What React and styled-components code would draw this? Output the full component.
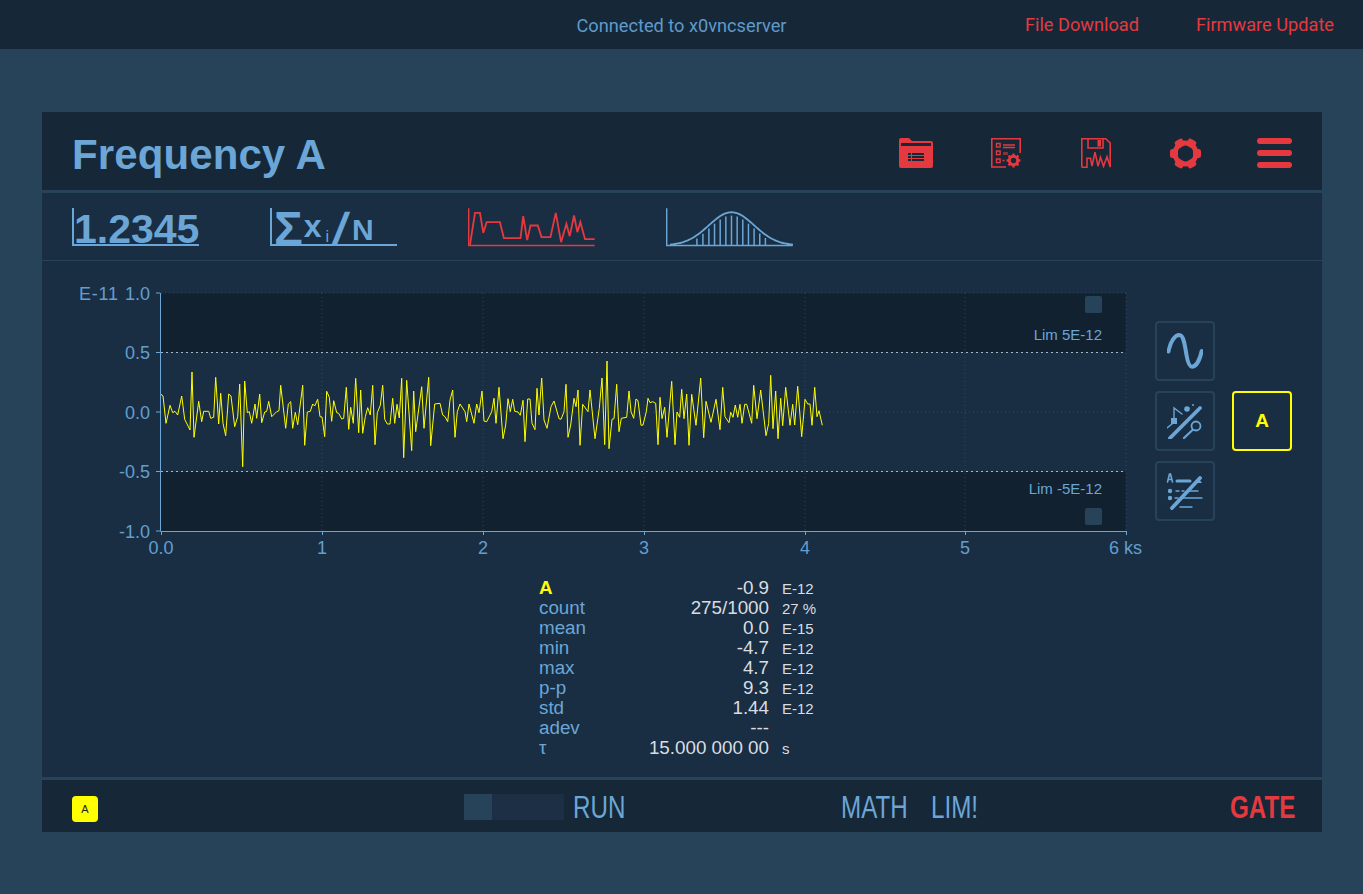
import React from 'react';
import styled, { createGlobalStyle } from 'styled-components';

const BLUE = '#6ba6d6';
const RED = '#e4393f';
const YELLOW = '#ffff00';

const GlobalStyle = createGlobalStyle`
  html, body {
    margin: 0;
    padding: 0;
    background: #27435a;
    font-family: "Liberation Sans", Arial, sans-serif;
  }
`;

const Page = styled.div`
  height: 894px;
  overflow: hidden;
`;

const TopBar = styled.header`
  height: 49px;
  background: #162838;
  display: grid;
  grid-template-columns: 1fr auto 1fr;
  align-items: center;
  font-family: Roboto, sans-serif;
  font-size: 18.2px;
`;

const Connected = styled.div`
  grid-column: 2;
  color: #5f9acb;
  padding-top: 1px;
`;

const TopLinks = styled.nav`
  display: flex;
  justify-content: flex-end;
  gap: 57px;
  padding-right: 29px;
`;

const TopLink = styled.a`
  color: ${RED};
`;

const Panel = styled.main`
  width: 1280px;
  height: 720px;
  margin: 63px 0 0 42px;
  background: #192e43;
  display: flex;
  flex-direction: column;
`;

const Header = styled.div`
  height: 78px;
  flex: none;
  background: #162838;
  border-bottom: 3px solid #27435a;
  display: flex;
  align-items: center;
  padding: 0 30px;
`;

const Title = styled.h1`
  margin: 0;
  flex: 1;
  font-size: 42px;
  font-weight: 700;
  letter-spacing: 0.1px;
  color: ${BLUE};
  position: relative;
  top: 4px;
`;

const HeaderIcons = styled.div`
  display: flex;
  align-items: center;
  color: ${RED};
  margin-top: 4px;
`;

const HeaderIcon = styled.div`
  width: ${(p) => p.$w}px;
  margin-left: ${(p) => p.$gap}px;
  display: flex;
  justify-content: center;
`;

const Tabs = styled.div`
  height: 68px;
  flex: none;
  display: flex;
  gap: 71px;
  align-items: flex-start;
  padding: 15px 30px 0;
  box-sizing: border-box;
  border-bottom: 1px solid #27435a;
`;

const Tab = styled.div`
  width: 127px;
  height: 38px;
  box-sizing: border-box;
  border-left: 2px solid ${BLUE};
  border-bottom: 2px solid ${BLUE};
  color: ${BLUE};
  display: flex;
  align-items: flex-end;
  white-space: nowrap;
  font-weight: 700;
`;

const TabPlain = styled.div`
  width: 127px;
  height: 38px;
`;

const BigNumber = styled.span`
  font-size: 41px;
  line-height: 41px;
  margin-bottom: -6px;
`;

const Mean = styled.div`
  display: flex;
  align-items: baseline;
  margin-left: 2px;
  margin-bottom: -9px;
`;

const Sigma = styled.span`
  font-size: 48px;
  line-height: 47px;
`;

const MeanX = styled.span`
  font-size: ${(p) => p.$size}px;
  margin-left: ${(p) => p.$gap}px;
  position: relative;
  top: ${(p) => p.$lift}px;
`;

const MeanSub = styled.span`
  font-size: 16px;
  font-weight: 400;
  margin-left: 4px;
  position: relative;
  top: -3px;
`;

const MeanDiv = styled.span`
  font-size: 46px;
  line-height: 47px;
  margin-left: 5px;
  font-weight: 700;
  transform: skewX(-12deg);
`;

const ChartArea = styled.section`
  display: flex;
  flex: none;
`;

const Plot = styled.svg`
  display: block;
  width: 1113px;
  height: 304px;
  flex: none;
`;

const SideButtons = styled.div`
  display: grid;
  grid-template-columns: 60px 60px;
  grid-template-rows: repeat(3, 60px);
  column-gap: 17px;
  row-gap: 10px;
  padding-top: 60px;
`;

const SideButton = styled.button`
  padding: 0;
  background: none;
  box-sizing: border-box;
  border: 2px solid ${(p) => (p.$active ? YELLOW : '#27435a')};
  border-radius: 4px;
  display: flex;
  align-items: center;
  justify-content: center;
  color: ${YELLOW};
  font: 700 19px "Liberation Sans", sans-serif;
  grid-column: ${(p) => (p.$active ? 2 : 1)};
  grid-row: ${(p) => p.$row};
`;

const Stats = styled.section`
  flex: 1;
  padding: 13px 0 0 497px;
  display: grid;
  grid-template-columns: 100px 130px 60px;
  grid-auto-rows: 20px;
  align-items: center;
  font-size: 18.8px;
`;

const StatLabel = styled.div`
  color: ${(p) => (p.$head ? YELLOW : BLUE)};
  font-weight: ${(p) => (p.$head ? 700 : 400)};
`;

const StatValue = styled.div`
  color: #d9dde0;
  text-align: right;
`;

const StatUnit = styled.div`
  color: #d9dde0;
  font-size: 15px;
  padding-left: 13px;
  white-space: nowrap;
`;

const Footer = styled.footer`
  height: 55px;
  flex: none;
  box-sizing: border-box;
  background: #162838;
  border-top: 3px solid #27435a;
  display: flex;
  align-items: center;
  padding: 0 27px 0 30px;
`;

const Badge = styled.div`
  width: 26px;
  height: 26px;
  flex: none;
  border-radius: 4px;
  background: ${YELLOW};
  color: #222;
  font-size: 11px;
  display: flex;
  align-items: center;
  justify-content: center;
  margin-top: 6px;
  margin-right: 366px;
`;

const Progress = styled.div`
  width: 100px;
  height: 26px;
  flex: none;
  background: #1c2f44;
  margin-top: 2px;
  margin-right: 9px;
`;

const ProgressFill = styled.div`
  height: 100%;
  background: #27435a;
`;

// no narrow face is installed, so the regular one is squeezed
const FooterLabel = styled.span`
  flex: none;
  width: ${(p) => p.$w}px;
  margin-left: ${(p) => p.$gap || 0}px;
  font-size: 31px;
  line-height: 36px;
  white-space: nowrap;
  color: ${(p) => (p.$red ? RED : BLUE)};
  font-weight: ${(p) => (p.$red ? 700 : 400)};
  transform: translateY(2px) scaleX(0.78);
  transform-origin: left center;
`;

const AxisText = styled.text`
  font-family: "Liberation Sans", sans-serif;
  font-size: 18px;
  fill: #639ecf;
`;

const LimText = styled.text`
  font-family: "Liberation Sans", sans-serif;
  font-size: 15px;
  fill: ${BLUE};
`;

// trace, read off the reference in 3x crop coordinates
const part1 = [[303,343],[309,348],[318,430],[330,376],[338,398],[345,394],[353,405],[365,348],[374,418],[390,450],[396,276],[402,472],[416,364],[425,425],[431,394],[446,394],[452,415],[461,412],[467,292],[476,432],[482,340],[489,430],[497,467],[506,342],[513,348],[524,440],[533,410],[539,312],[548,560],[554,303],[562,398],[568,395],[575,430],[585,372],[590,415],[599,342],[605,428],[614,396],[620,394],[626,364],[635,410],[650,395],[657,392],[662,316],[677,445],[685,372],[692,365],[698,445],[706,397],[713,434],[728,316],[734,496],[742,396],[751,394],[758,372],[764,378],[773,358],[780,410],[786,411],[794,470],[800,334],[808,352],[815,424],[821,362],[830,398],[836,400],[845,417],[851,415],[859,322],[866,448],[872,382],[880,430],[887,295],[896,458],[902,330],[908,460],[916,410],[923,383],[931,405],[938,316],[945,494],[952,398],[961,376],[968,316],[974,418],[982,432],[990,432],[998,355],[1004,430],[1011,373],[1018,414],[1025,295],[1031,533],[1040,301],[1055,512],[1061,333],[1067,455],[1085,320],[1092,445],[1106,292],[1112,497],[1124,372],[1140,370],[1148,405],[1155,410],[1163,425]];
const part2 = [[0,180],[8,150],[15,292],[22,215],[30,192],[45,215],[50,245],[57,192],[72,250],[80,192],[87,218],[96,153],[102,243],[110,245],[125,215],[132,175],[138,250],[147,142],[159,296],[167,255],[174,176],[181,215],[188,178],[194,214],[204,216],[211,226],[219,181],[225,305],[233,177],[240,177],[246,250],[255,269],[261,145],[267,225],[275,114],[282,240],[291,265],[303,200],[312,183],[327,236],[333,238],[342,215],[348,133],[354,292],[362,255],[372,175],[378,200],[384,150],[390,316],[398,193],[414,215],[420,150],[435,296],[448,205],[456,114],[464,314],[471,63],[477,326],[486,238],[492,236],[500,133],[507,275],[514,235],[530,232],[537,153],[543,215],[551,235],[558,177],[564,182],[573,256],[579,255],[589,215],[594,175],[600,188],[608,185],[617,190],[624,314],[630,172],[636,236],[644,202],[651,292],[665,124],[675,314],[681,216],[689,232],[695,148],[702,236],[710,162],[717,316],[725,163],[738,256],[752,114],[761,293],[768,184],[783,247],[798,178],[810,269],[818,142],[825,230],[837,248],[842,217],[849,232],[856,195],[863,232],[870,193],[876,250],[884,193],[890,193],[905,250],[911,136],[921,236],[932,150],[948,287],[956,250],[962,106],[969,266],[977,153],[984,296],[992,175],[998,257],[1007,142],[1020,256],[1028,193],[1034,255],[1043,139],[1055,290],[1065,178],[1073,192],[1080,192],[1086,256],[1094,142],[1101,230],[1107,212],[1117,256]];
const trace = [
  ...part1.map(([x, y]) => [60 + x / 3, 280 + y / 3]),
  ...part2.map(([x, y]) => [450 + x / 3, 340 + y / 3]),
].map(([x, y]) => `${x.toFixed(1)},${y.toFixed(1)}`).join(' ');

const xTicks = [161, 322, 483, 644, 805, 965, 1126];
const xLabels = ['0.0', '1', '2', '3', '4', '5', '6 ks'];
const yTicks = [
  [293, '1.0'],
  [352.5, '0.5'],
  [412, '0.0'],
  [471.5, '-0.5'],
  [531, '-1.0'],
];

const FolderIcon = () => (
  <svg width="34" height="30" viewBox="0 0 34 30">
    <path fill="currentColor" d="M0 2a2 2 0 0 1 2-2h8l3 3h19a2 2 0 0 1 2 2v23a2 2 0 0 1-2 2H2a2 2 0 0 1-2-2z" />
    <path fill="#162838" d="M2 5h30v3H2zM9 15h3v2H9zM13 15h12v2H13zM9 18h3v2H9zM13 18h12v2H13zM9 21h3v2H9zM13 21h12v2H13z" />
  </svg>
);

const ChecklistIcon = () => (
  <svg width="30" height="30" viewBox="0 0 30 30" fill="none" stroke="currentColor" strokeWidth="1.4">
    <path strokeWidth="1.6" d="M15 29H.8V.8h28.4V15" />
    <path d="M5.5 5.5h3.6v3.6H5.5zM5.5 13h3.6v3.6H5.5zM5.5 21h3.6v3.6H5.5zM12 7h12M12 9.5h12M11.5 22.5h2" />
    <path fill="currentColor" stroke="none" opacity="0.55" d="M12 14h5v3h-5z" />
    <circle cx="22.5" cy="22.5" r="4.2" strokeWidth="3" />
    <path strokeWidth="2.4" d="M22.5 15.5v2.4M22.5 27v2.4M15.6 22.5H18M27 22.5h2.4M17.6 17.6l1.7 1.7M25.7 25.7l1.7 1.7M27.4 17.6l-1.7 1.7M19.3 25.7l-1.7 1.7" />
  </svg>
);

const SaveWaveIcon = () => (
  <svg width="30" height="30" viewBox="0 0 30 30" fill="none" stroke="currentColor" strokeWidth="1.6">
    <path d="M.8 29.2V.8h24l4.4 4.4v24" />
    <path d="M7 1v9h15V1" />
    <path fill="currentColor" stroke="none" d="M16.5 2h3.5v6.5h-3.5z" />
    <path d="M.8 29.2H6v-9h3.5l1.5 8 3-14 3 14 2.5-9 3 9 3.5-9.5 3 9.5" />
  </svg>
);

const GearIcon = () => (
  <svg width="31" height="31" viewBox="0 0 31 31" fill="currentColor">
    {[30, 90, 150, 210, 270, 330].map((a) => (
      <rect key={a} x="11" y="0" width="9" height="8" rx="2.5" transform={`rotate(${a} 15.5 15.5)`} />
    ))}
    <circle cx="15.5" cy="15.5" r="10.5" fill="none" stroke="currentColor" strokeWidth="5" />
  </svg>
);

const MenuIcon = () => (
  <svg width="35" height="30" viewBox="0 0 35 30" fill="currentColor">
    <rect x="0" y="0" width="35" height="6" rx="3" />
    <rect x="0" y="12" width="35" height="6" rx="3" />
    <rect x="0" y="24" width="35" height="6" rx="3" />
  </svg>
);

const TraceTab = () => (
  <svg width="127" height="39" viewBox="54 38 382 116" fill="none" stroke={RED}>
    <path strokeWidth="4.5" d="M56 38v112h379" />
    <polyline strokeWidth="5.5" points="60,148 75,52 90,52 100,112 110,80 150,80 162,128 212,128 220,62 232,134 242,90 264,90 275,125 302,125 318,52 334,140 350,85 360,122 373,60 383,110 392,80 406,131 435,131" />
  </svg>
);

const histBars = [741, 759, 777, 794, 811, 828, 845, 862, 879, 896, 913, 930, 947];
const bell = (x) => 150 - 100 * Math.exp(-((x - 845) ** 2) / (2 * 68 ** 2));
const bellPoints = Array.from({ length: 75 }, (_, i) => 660 + i * 5)
  .map((x) => `${x},${bell(x).toFixed(1)}`)
  .join(' ');

const HistogramTab = () => (
  <svg width="127" height="39" viewBox="648 38 382 116" fill="none" stroke={BLUE}>
    <path strokeWidth="4.5" d="M650 38v112h379" />
    <polyline strokeWidth="5.5" points={bellPoints} />
    {histBars.map((x) => (
      <line key={x} x1={x} x2={x} y1="150" y2={bell(x) + 10} strokeWidth="4.5" />
    ))}
  </svg>
);

const SineIcon = () => (
  <svg width="36" height="36" viewBox="0 0 36 36" fill="none" stroke={BLUE} strokeWidth="4" strokeLinecap="round">
    <path d="M1.5 18.5C3.5 8 8 2 12.3 2c4.7 0 5.7 12 7.2 20 1 6 2.5 11.7 5.5 11.7 4.5 0 8-7.7 9.7-15.7" />
  </svg>
);

const MathIcon = () => (
  <svg width="36" height="36" viewBox="0 0 36 36" fill="none" stroke={BLUE} strokeLinecap="round">
    <path strokeWidth="3.8" d="M3 35 33 5" />
    <path strokeWidth="1.4" d="M7 16V5l8 6M0 25l5-4" />
    <rect x="4" y="15" width="6" height="6" fill={BLUE} stroke="none" />
    <circle cx="20" cy="6" r="2.8" fill={BLUE} stroke="none" />
    <circle cx="26" cy="2" r="1" fill={BLUE} stroke="none" />
    <circle cx="29" cy="23" r="4.5" strokeWidth="1.8" />
    <path strokeWidth="2.2" d="M25.5 27 17 35" />
  </svg>
);

const LimitIcon = () => (
  <svg width="38" height="38" viewBox="0 0 38 38" fill="none" stroke={BLUE} strokeLinecap="round">
    <path strokeWidth="3.8" d="M6 36 34 6" />
    <path strokeWidth="1.6" d="M1.5 10 3.5 2h1l2 8M2.2 7.5h3.6" />
    <path strokeWidth="3" d="M11 9h13" />
    <path fill={BLUE} stroke="none" d="M29 11h7l-3-4z" />
    <path strokeWidth="1.4" d="M10 19h3M16 19h2M24 19h8M17 26h19M14 35h12" />
    <circle cx="4" cy="19" r="2.2" fill={BLUE} stroke="none" />
    <circle cx="4" cy="26" r="2.2" fill={BLUE} stroke="none" />
    <path strokeWidth="1.4" d="M9 26h3" />
  </svg>
);

const stats = [
  ['A', '-0.9', 'E-12', true],
  ['count', '275/1000', '27 %'],
  ['mean', '0.0', 'E-15'],
  ['min', '-4.7', 'E-12'],
  ['max', '4.7', 'E-12'],
  ['p-p', '9.3', 'E-12'],
  ['std', '1.44', 'E-12'],
  ['adev', '---', ''],
  ['τ', '15.000 000 00', 's'],
];

const App = () => (
  <Page>
    <GlobalStyle />
    <TopBar>
      <Connected>Connected to x0vncserver</Connected>
      <TopLinks>
        <TopLink>File Download</TopLink>
        <TopLink>Firmware Update</TopLink>
      </TopLinks>
    </TopBar>
    <Panel>
      <Header>
        <Title>Frequency A</Title>
        <HeaderIcons>
          <HeaderIcon $w={34} $gap={0}><FolderIcon /></HeaderIcon>
          <HeaderIcon $w={30} $gap={58}><ChecklistIcon /></HeaderIcon>
          <HeaderIcon $w={30} $gap={60}><SaveWaveIcon /></HeaderIcon>
          <HeaderIcon $w={31} $gap={59}><GearIcon /></HeaderIcon>
          <HeaderIcon $w={35} $gap={56}><MenuIcon /></HeaderIcon>
        </HeaderIcons>
      </Header>
      <Tabs>
        <Tab><BigNumber>1.2345</BigNumber></Tab>
        <Tab>
          <Mean>
            <Sigma>Σ</Sigma>
            <MeanX $size={32} $gap={1} $lift={-8}>x</MeanX>
            <MeanSub>i</MeanSub>
            <MeanDiv>/</MeanDiv>
            <MeanX $size={30} $gap={5} $lift={-5}>N</MeanX>
          </Mean>
        </Tab>
        <TabPlain><TraceTab /></TabPlain>
        <TabPlain><HistogramTab /></TabPlain>
      </Tabs>
      <ChartArea>
        <Plot viewBox="42 261 1113 304">
          <rect x="161" y="293" width="965" height="59" fill="#112130" />
          <rect x="161" y="472" width="965" height="59" fill="#112130" />
          {xTicks.slice(1).map((x) => (
            <line key={x} x1={x} x2={x} y1="293" y2="531" stroke="#2c4a63" strokeDasharray="1 3" />
          ))}
          {[293, 412].map((y) => (
            <line key={y} x1="161" x2="1126" y1={y} y2={y} stroke="#2c4a63" strokeDasharray="1 3" />
          ))}
          <line x1="161" x2="1126" y1="352.5" y2="352.5" stroke="#a9b8c4" strokeDasharray="2 3" />
          <line x1="161" x2="1126" y1="471.5" y2="471.5" stroke="#a9b8c4" strokeDasharray="2 3" />
          <path d="M160.5 293v238.5H1126" fill="none" stroke={BLUE} />
          {yTicks.map(([y, label]) => (
            <g key={label}>
              <line x1="156" x2="160" y1={y} y2={y} stroke={BLUE} />
              <AxisText x="150" y={y + 6.5} textAnchor="end">{label}</AxisText>
            </g>
          ))}
          <AxisText x="79" y="299.5" textLength="39">E-11</AxisText>
          {xTicks.map((x, i) => (
            <g key={x}>
              <line x1={x + 0.5} x2={x + 0.5} y1="531" y2="535" stroke={BLUE} />
              <AxisText x={i === 6 ? 1125.5 : x} y="554" textAnchor="middle">{xLabels[i]}</AxisText>
            </g>
          ))}
          <polyline points={trace} fill="none" stroke={YELLOW} strokeWidth="1" />
          <LimText x="1102" y="340" textAnchor="end">Lim 5E-12</LimText>
          <LimText x="1102" y="494" textAnchor="end">Lim -5E-12</LimText>
          <rect x="1085" y="296" width="17" height="17" rx="2" fill="#27435a" />
          <rect x="1085" y="508" width="17" height="17" rx="2" fill="#27435a" />
        </Plot>
        <SideButtons>
          <SideButton $row={1}><SineIcon /></SideButton>
          <SideButton $row={2}><MathIcon /></SideButton>
          <SideButton $row={3}><LimitIcon /></SideButton>
          <SideButton $active $row={2}>A</SideButton>
        </SideButtons>
      </ChartArea>
      <Stats>
        {stats.map(([label, value, unit, head]) => (
          <React.Fragment key={label}>
            <StatLabel $head={head}>{label}</StatLabel>
            <StatValue>{value}</StatValue>
            <StatUnit>{unit}</StatUnit>
          </React.Fragment>
        ))}
      </Stats>
      <Footer>
        <Badge>A</Badge>
        <Progress><ProgressFill style={{ width: '28%' }} /></Progress>
        <FooterLabel $w={52}>RUN</FooterLabel>
        <FooterLabel $w={67} $gap={216}>MATH</FooterLabel>
        <FooterLabel $w={47} $gap={23}>LIM!</FooterLabel>
        <FooterLabel $w={65} $gap={252} $red>GATE</FooterLabel>
      </Footer>
    </Panel>
  </Page>
);

export default App;
